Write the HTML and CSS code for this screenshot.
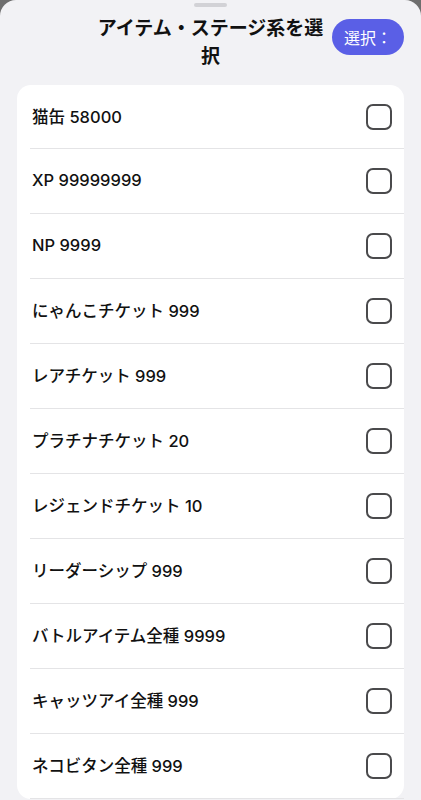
FILE: index.html
```html
<!DOCTYPE html>
<html lang="ja">
  <head>
    <meta charset="UTF-8" />
    <meta name="viewport" content="width=device-width, initial-scale=1.0" />
    <title>アイテム・ステージ系を選択</title>
    <link rel="stylesheet" href="styles.css">
  </head>
  <body>
    <div class="sheet">
      <div class="sheet-handle"></div>
      <div class="sheet-header">
        <div class="header-spacer"></div>
        <h2 class="sheet-title">アイテム・ステージ系を選択</h2>
        <button class="select-button">選択：</button>
      </div>
      <div class="item-list">
        <label class="item-row"><span class="item-name">猫缶 58000</span><input type="checkbox" class="item-check" /></label>
        <label class="item-row"><span class="item-name">XP 99999999</span><input type="checkbox" class="item-check" /></label>
        <label class="item-row"><span class="item-name">NP 9999</span><input type="checkbox" class="item-check" /></label>
        <label class="item-row"><span class="item-name">にゃんこチケット 999</span><input type="checkbox" class="item-check" /></label>
        <label class="item-row"><span class="item-name">レアチケット 999</span><input type="checkbox" class="item-check" /></label>
        <label class="item-row"><span class="item-name">プラチナチケット 20</span><input type="checkbox" class="item-check" /></label>
        <label class="item-row"><span class="item-name">レジェンドチケット 10</span><input type="checkbox" class="item-check" /></label>
        <label class="item-row"><span class="item-name">リーダーシップ 999</span><input type="checkbox" class="item-check" /></label>
        <label class="item-row"><span class="item-name">バトルアイテム全種 9999</span><input type="checkbox" class="item-check" /></label>
        <label class="item-row"><span class="item-name">キャッツアイ全種 999</span><input type="checkbox" class="item-check" /></label>
        <label class="item-row"><span class="item-name">ネコビタン全種 999</span><input type="checkbox" class="item-check" /></label>
      </div>
    </div>
  </body>
</html>
```

FILE: styles.css
```css
* {
  margin: 0;
  padding: 0;
  box-sizing: border-box;
}

body {
  font-family: Inter, "Noto Sans CJK JP", sans-serif;
  background: #6e6e6e;
  height: 100vh;
  overflow: hidden;
}

.sheet {
  background: #f2f2f5;
  border-radius: 16px 16px 0 0;
  min-height: 100vh;
  padding: 3px 17px 0;
}

.sheet-handle {
  width: 33px;
  height: 4px;
  border-radius: 2px;
  background: #d2d2d6;
  margin: 0 auto;
}

.sheet-header {
  display: flex;
  align-items: flex-start;
  margin-top: 8px;
  height: 70px;
}

.header-spacer {
  width: 72px;
  flex-shrink: 0;
}

.sheet-title {
  flex: 1;
  text-align: center;
  font-size: 19px;
  line-height: 28px;
  font-weight: 700;
  color: #111;
}

.select-button {
  width: 72px;
  height: 36px;
  flex-shrink: 0;
  border: none;
  border-radius: 18px;
  background: #5a5fe6;
  color: white;
  font-family: inherit;
  font-size: 16px;
  margin-top: 4px;
}

.item-list {
  background: white;
  border-radius: 14px;
  display: flex;
  flex-direction: column;
}

.item-row {
  display: flex;
  align-items: center;
  justify-content: space-between;
  height: 65px;
  margin-left: 13px;
  padding-right: 12px;
  border-bottom: 1px solid #e4e4e6;
}

.item-row:first-child {
  height: 64px;
}

.item-name {
  font-size: 16.5px;
  font-weight: 500;
  color: #111;
  padding-left: 2px;
  margin-top: -2px;
}

.item-check {
  appearance: none;
  width: 26px;
  height: 26px;
  border: 2px solid #4a4a4c;
  border-radius: 7px;
  background: white;
}
```
